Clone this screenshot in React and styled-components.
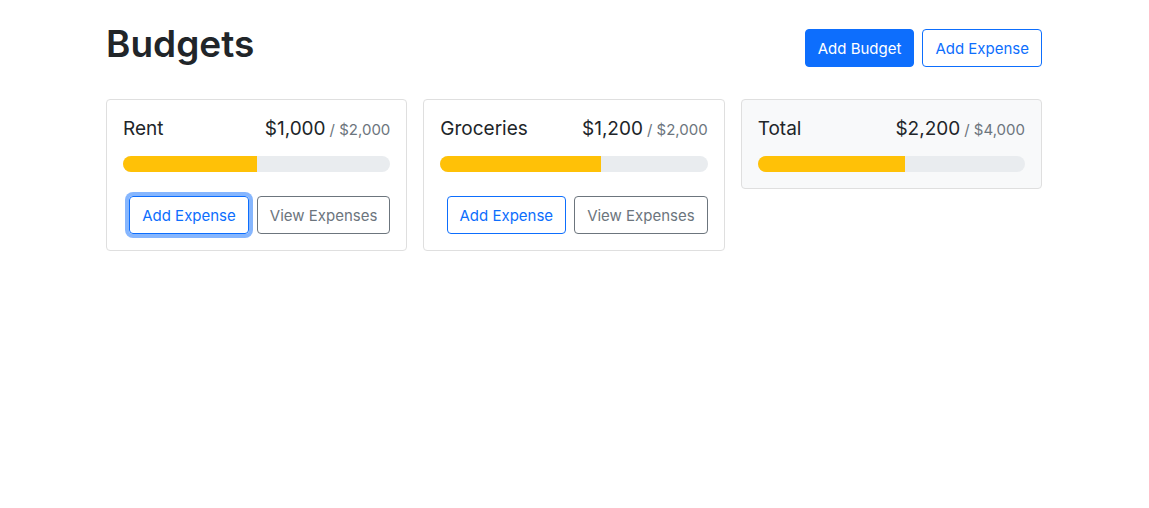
import React from "react";
import styled, { createGlobalStyle } from "styled-components";

const GlobalStyle = createGlobalStyle`
  *, *::before, *::after { box-sizing: border-box; }
  body {
    margin: 0;
    background: #fff;
    color: #212529;
    font-family: Inter, Roboto, "Liberation Sans", sans-serif;
    font-size: 16px;
    line-height: 24px;
  }
`;

const Container = styled.main`
  max-width: 961px;
  margin: 0 auto;
  padding: 24px 13px 24px 12px;
`;

const Header = styled.header`
  display: flex;
  align-items: center;
  gap: 8px;
  margin-bottom: 27px;
`;

const Title = styled.h1`
  margin: 0 auto 8px 0;
  font-size: 37px;
  font-weight: 600;
  line-height: 40px;
`;

const variants = {
  primary: { color: "#fff", background: "#0d6efd", border: "#0d6efd" },
  outlinePrimary: { color: "#0d6efd", background: "transparent", border: "#0d6efd" },
  outlineSecondary: { color: "#6c757d", background: "transparent", border: "#6c757d" },
};

const Button = styled.button`
  padding: 7px 12px 5px;
  border: 1px solid ${({ $variant }) => variants[$variant].border};
  border-radius: 4px;
  background: ${({ $variant }) => variants[$variant].background};
  color: ${({ $variant }) => variants[$variant].color};
  font: inherit;
  font-size: 15px;
  white-space: nowrap;
  cursor: pointer;
  outline: none;
  box-shadow: ${({ $focused }) => ($focused ? "0 0 0 4px rgba(13, 110, 253, 0.5)" : "none")};
`;

const Grid = styled.div`
  display: grid;
  grid-template-columns: repeat(auto-fill, minmax(300px, 1fr));
  gap: 16px;
  align-items: start;
`;

const Card = styled.section`
  padding: 16px;
  border: 1px solid #dfdfdf;
  border-radius: 4px;
  background: ${({ $muted }) => ($muted ? "#f8f9fa" : "#fff")};
`;

const CardTitle = styled.div`
  display: flex;
  justify-content: space-between;
  align-items: baseline;
  margin-bottom: 14px;
`;

const Name = styled.h2`
  margin: 0;
  font-size: 19px;
  font-weight: 400;
  line-height: 26px;
`;

const Amount = styled.div`
  font-size: 19px;
  line-height: 26px;
`;

const Limit = styled.span`
  margin-left: 4px;
  color: #6c757d;
  font-size: 15px;
  line-height: 16px;
`;

const Track = styled.div`
  height: 16px;
  overflow: hidden;
  border-radius: 8px;
  background: #e9ecef;
`;

const Bar = styled.div`
  height: 100%;
  background: #ffc107;
`;

const Actions = styled.div`
  display: flex;
  justify-content: flex-end;
  gap: 8px;
  margin-top: 24px;
`;

const money = (value) => "$" + value.toLocaleString("en-US");

function BudgetCard({ name, amount, max, muted, focused, hideButtons }) {
  return (
    <Card $muted={muted}>
      <CardTitle>
        <Name>{name}</Name>
        <Amount>
          {money(amount)}
          <Limit>/ {money(max)}</Limit>
        </Amount>
      </CardTitle>
      <Track role="progressbar" aria-label={name} aria-valuemin={0} aria-valuemax={max} aria-valuenow={amount}>
        <Bar style={{ width: `${(amount / max) * 100}%` }} />
      </Track>
      {!hideButtons && (
        <Actions>
          <Button type="button" $variant="outlinePrimary" $focused={focused}>Add Expense</Button>
          <Button type="button" $variant="outlineSecondary">View Expenses</Button>
        </Actions>
      )}
    </Card>
  );
}

export default function App() {
  return (
    <>
      <GlobalStyle />
      <Container>
        <Header>
          <Title>Budgets</Title>
          <Button type="button" $variant="primary">Add Budget</Button>
          <Button type="button" $variant="outlinePrimary">Add Expense</Button>
        </Header>
        <Grid>
          <BudgetCard name="Rent" amount={1000} max={2000} focused />
          <BudgetCard name="Groceries" amount={1200} max={2000} />
          <BudgetCard name="Total" amount={2200} max={4000} muted hideButtons />
        </Grid>
      </Container>
    </>
  );
}
